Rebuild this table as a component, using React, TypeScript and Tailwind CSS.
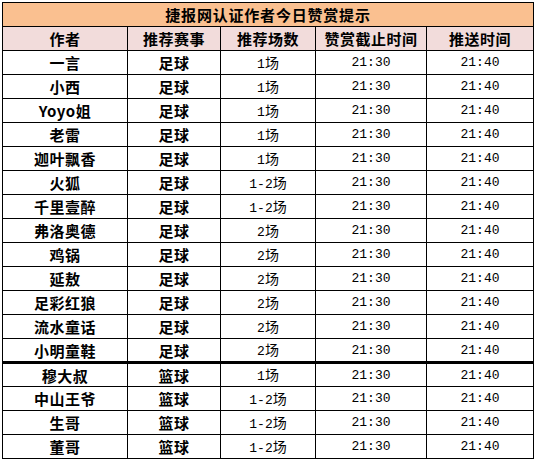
const rows: [string, string, string][] = [
  ["一言", "足球", "1"],
  ["小西", "足球", "1"],
  ["Yoyo姐", "足球", "1"],
  ["老雷", "足球", "1"],
  ["迦叶飘香", "足球", "1"],
  ["火狐", "足球", "1-2"],
  ["千里壹醉", "足球", "1-2"],
  ["弗洛奥德", "足球", "2"],
  ["鸡锅", "足球", "2"],
  ["延敖", "足球", "2"],
  ["足彩红狼", "足球", "2"],
  ["流水童话", "足球", "2"],
  ["小明童鞋", "足球", "2"],
  ["穆大叔", "篮球", "1"],
  ["中山王爷", "篮球", "1-2"],
  ["生哥", "篮球", "1-2"],
  ["董哥", "篮球", "1-2"],
];

const cjk = "font-['Noto_Sans_CJK_SC',sans-serif]";
const mono = "font-['Liberation_Mono','Noto_Sans_CJK_SC',monospace]";

export default function App() {
  return (
    <div className="w-[535px] h-[461px] bg-white pt-[2px] pl-[2px] overflow-hidden">
      <div className="w-[532px] border-l border-t border-black text-black">
        <div
          className={`h-[24px] border-r border-b border-black bg-[#fac090] flex items-center justify-center text-[15px] font-bold tracking-[0.8px] leading-none ${cjk}`}
        >
          捷报网认证作者今日赞赏提示
        </div>
        <div className="grid grid-cols-[125px_93px_95px_111px_107px] h-[24px] bg-[#f2dcdb]">
          {["作者", "推荐赛事", "推荐场数", "赞赏截止时间", "推送时间"].map((h) => (
            <div
              key={h}
              className={`border-r border-b border-black flex items-center justify-center text-[15px] font-bold tracking-[0.5px] leading-none ${cjk}`}
            >
              {h}
            </div>
          ))}
        </div>
        {rows.map(([name, sport, count], i) => {
          const h = i === 12 ? "h-[25px] border-b-[3px]" : i === 13 ? "h-[23px] border-b" : "h-[24px] border-b";
          return (
            <div key={name} className={`grid grid-cols-[125px_93px_95px_111px_107px] ${h} border-black`}>
              <div className={`border-r border-black flex items-center justify-center text-[15px] font-bold tracking-[0.5px] leading-none ${cjk}`}>
                {name}
              </div>
              <div className={`border-r border-black flex items-center justify-center text-[15px] font-bold tracking-[0.5px] leading-none ${cjk}`}>
                {sport}
              </div>
              <div className={`border-r border-black flex items-center justify-center text-[13px] leading-none ${mono}`}>
                <span>
                  {count}
                  <span className={`text-[14px] ${cjk}`}>场</span>
                </span>
              </div>
              <div className={`border-r border-black flex items-center justify-center text-[13px] leading-none ${mono}`}>
                21:30
              </div>
              <div className={`border-r border-black flex items-center justify-center text-[13px] leading-none ${mono}`}>
                21:40
              </div>
            </div>
          );
        })}
      </div>
    </div>
  );
}
